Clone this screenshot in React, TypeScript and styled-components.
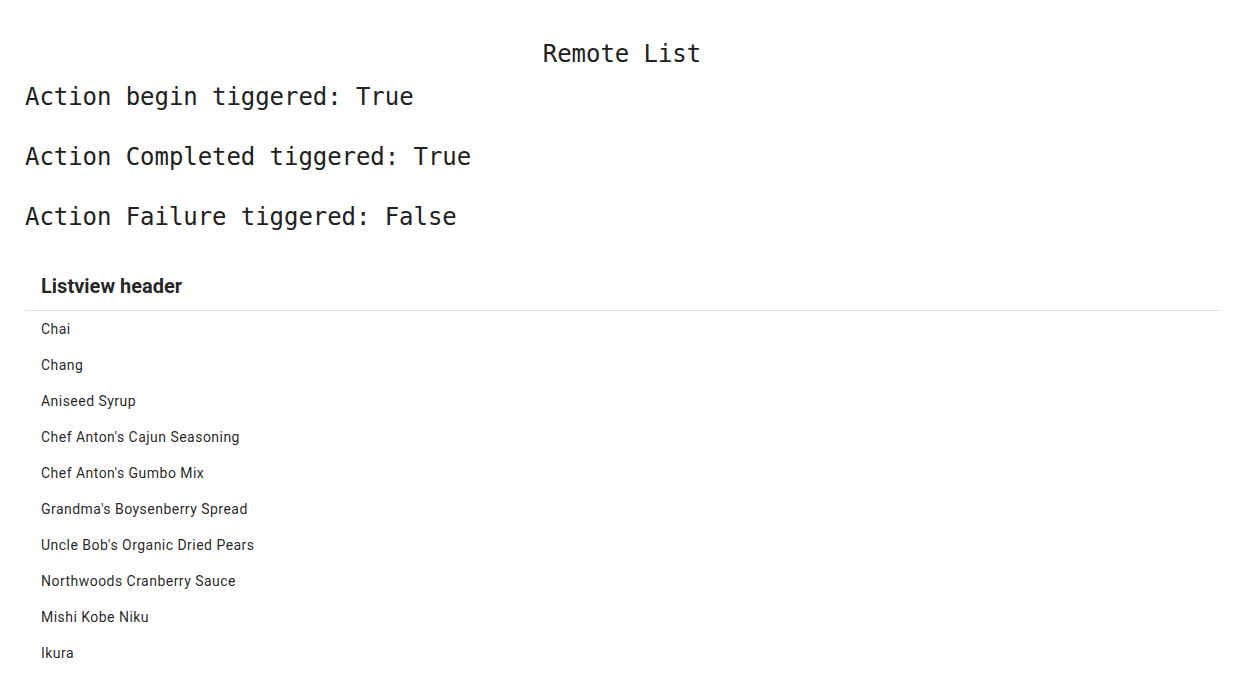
import React from 'react';
import styled, { createGlobalStyle } from 'styled-components';

const GlobalStyle = createGlobalStyle`
  html, body {
    margin: 0;
    padding: 0;
    background: #ffffff;
  }
`;

const Page = styled.div`
  padding: 39px 25px 0;
  display: flex;
  flex-direction: column;
  font-family: 'DejaVu Sans Mono', 'Liberation Mono', monospace;
  color: #212121;
`;

const Title = styled.div`
  font-size: 24px;
  line-height: 30px;
  letter-spacing: -0.06px;
  text-align: center;
  margin-bottom: 13px;
`;

const Status = styled.div`
  font-size: 24px;
  line-height: 30px;
  letter-spacing: -0.06px;
  margin-bottom: 30px;
`;

const ListView = styled.div`
  font-family: Roboto, 'Noto Sans', sans-serif;
  color: rgba(0, 0, 0, 0.87);
`;

const ListHeader = styled.div`
  padding: 12px 16px;
  font-size: 20px;
  line-height: 24px;
  font-weight: 700;
  border-bottom: 1px solid #e0e0e0;
`;

const ListItem = styled.div`
  padding: 8px 16px;
  font-size: 14px;
  line-height: 20px;
  letter-spacing: 0.47px;
`;

const statuses = [
  { label: 'Action begin tiggered', value: 'True' },
  { label: 'Action Completed tiggered', value: 'True' },
  { label: 'Action Failure tiggered', value: 'False' },
];

const products = [
  'Chai',
  'Chang',
  'Aniseed Syrup',
  "Chef Anton's Cajun Seasoning",
  "Chef Anton's Gumbo Mix",
  "Grandma's Boysenberry Spread",
  "Uncle Bob's Organic Dried Pears",
  'Northwoods Cranberry Sauce',
  'Mishi Kobe Niku',
  'Ikura',
];

const App = () => {
  return (
    <>
      <GlobalStyle />
      <Page>
        <Title>Remote List</Title>
        {statuses.map((s) => (
          <Status key={s.label}>
            {s.label}: {s.value}
          </Status>
        ))}
        <ListView>
          <ListHeader>Listview header</ListHeader>
          {products.map((p) => (
            <ListItem key={p}>{p}</ListItem>
          ))}
        </ListView>
      </Page>
    </>
  );
};

export default App;
